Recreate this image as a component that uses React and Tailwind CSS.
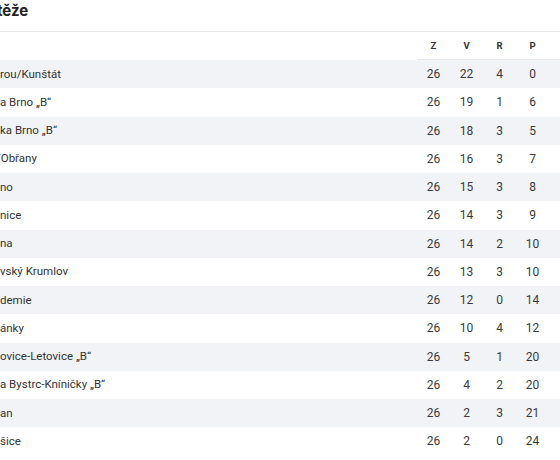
import React from 'react';

const rows = [
  { name: 'rou/Kunštát', z: 26, v: 22, r: 4, p: 0 },
  { name: 'a Brno „B“', z: 26, v: 19, r: 1, p: 6 },
  { name: 'ka Brno „B“', z: 26, v: 18, r: 3, p: 5 },
  { name: '/Obřany', z: 26, v: 16, r: 3, p: 7, shift: true },
  { name: 'no', z: 26, v: 15, r: 3, p: 8 },
  { name: 'nice', z: 26, v: 14, r: 3, p: 9 },
  { name: 'na', z: 26, v: 14, r: 2, p: 10 },
  { name: 'vský Krumlov', z: 26, v: 13, r: 3, p: 10 },
  { name: 'demie', z: 26, v: 12, r: 0, p: 14 },
  { name: 'ánky', z: 26, v: 10, r: 4, p: 12 },
  { name: 'ovice-Letovice „B“', z: 26, v: 5, r: 1, p: 20 },
  { name: 'a Bystrc-Kníničky „B“', z: 26, v: 4, r: 2, p: 20 },
  { name: 'an', z: 26, v: 2, r: 3, p: 21 },
  { name: 'šice', z: 26, v: 2, r: 0, p: 24 },
];

const App = () => {
  return (
    <div className="w-[560px] h-[460px] overflow-hidden bg-white text-[#333] font-['Roboto',sans-serif]">
      {/* title */}
      <div className="h-[32px] border-b border-[#e5e7eb] flex items-center">
        <h2 className="-ml-[3px] -mt-[9px] font-['Inter',sans-serif] text-[15px] font-bold text-[#222]">těže</h2>
      </div>

      {/* header */}
      <div className="flex h-[28px] items-center">
        <div className="flex-1" />
        <div className="flex h-full items-center border-b border-[#e5e7eb] pr-[11px] pt-[1px] text-[9.5px] font-bold text-[#333]">
          <span className="w-[33px] text-center">Z</span>
          <span className="w-[33px] text-center">V</span>
          <span className="w-[33px] text-center">R</span>
          <span className="w-[33px] text-center">P</span>
        </div>
      </div>

      {/* rows */}
      {rows.map((row, i) => (
        <div
          key={i}
          className={`flex h-[28.25px] items-center text-[11.5px] ${i % 2 === 0 ? 'bg-[#f2f3f6]' : 'bg-white'}`}
        >
          <div className="flex-1 overflow-hidden whitespace-nowrap">
            <span className={row.shift ? 'block -ml-[4px]' : 'block'}>{row.name}</span>
          </div>
          <div className="flex pr-[11px] text-[12px] text-[#3a3a3a]">
            <span className="w-[33px] text-center">{row.z}</span>
            <span className="w-[33px] text-center">{row.v}</span>
            <span className="w-[33px] text-center">{row.r}</span>
            <span className="w-[33px] text-center">{row.p}</span>
          </div>
        </div>
      ))}
    </div>
  );
};

export default App;
